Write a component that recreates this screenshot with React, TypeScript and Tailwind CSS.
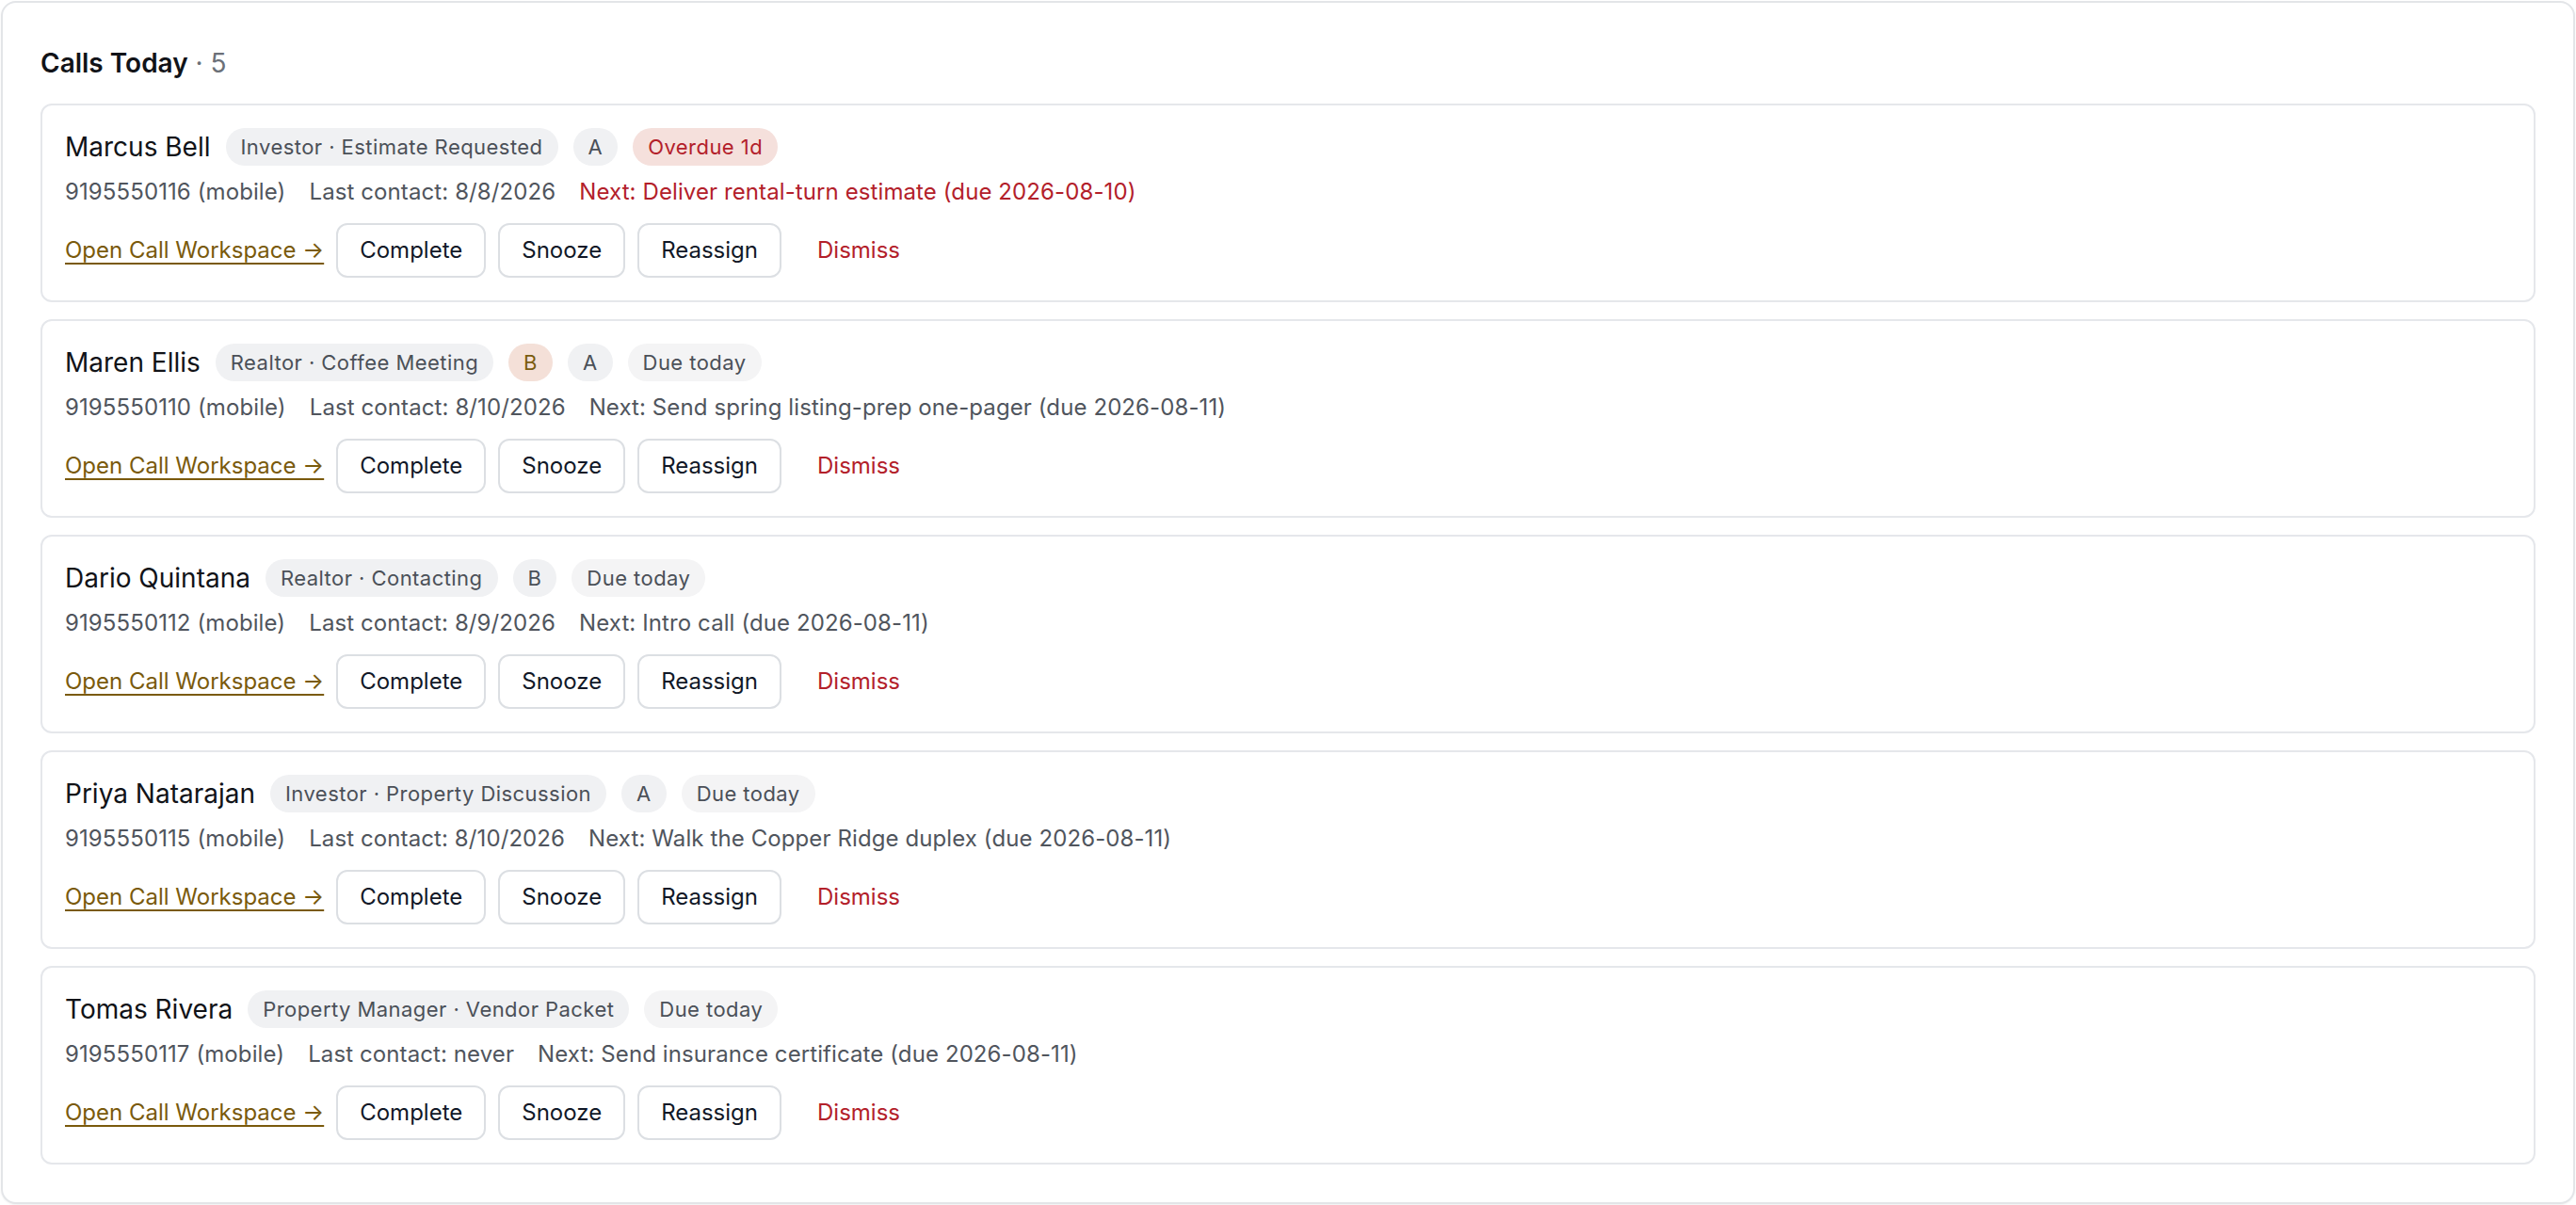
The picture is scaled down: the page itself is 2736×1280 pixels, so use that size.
import React from "react";

type Chip = { label: string; tone: "gray" | "grade" | "gradeB" | "due" | "overdue" };

type Call = {
  name: string;
  chips: Chip[];
  phone: string;
  last: string;
  next: string;
  overdue?: boolean;
};

const calls: Call[] = [
  {
    name: "Marcus Bell",
    chips: [
      { label: "Investor · Estimate Requested", tone: "gray" },
      { label: "A", tone: "grade" },
      { label: "Overdue 1d", tone: "overdue" },
    ],
    phone: "9195550116 (mobile)",
    last: "Last contact: 8/8/2026",
    next: "Next: Deliver rental-turn estimate (due 2026-08-10)",
    overdue: true,
  },
  {
    name: "Maren Ellis",
    chips: [
      { label: "Realtor · Coffee Meeting", tone: "gray" },
      { label: "B", tone: "gradeB" },
      { label: "A", tone: "grade" },
      { label: "Due today", tone: "due" },
    ],
    phone: "9195550110 (mobile)",
    last: "Last contact: 8/10/2026",
    next: "Next: Send spring listing-prep one-pager (due 2026-08-11)",
  },
  {
    name: "Dario Quintana",
    chips: [
      { label: "Realtor · Contacting", tone: "gray" },
      { label: "B", tone: "grade" },
      { label: "Due today", tone: "due" },
    ],
    phone: "9195550112 (mobile)",
    last: "Last contact: 8/9/2026",
    next: "Next: Intro call (due 2026-08-11)",
  },
  {
    name: "Priya Natarajan",
    chips: [
      { label: "Investor · Property Discussion", tone: "gray" },
      { label: "A", tone: "grade" },
      { label: "Due today", tone: "due" },
    ],
    phone: "9195550115 (mobile)",
    last: "Last contact: 8/10/2026",
    next: "Next: Walk the Copper Ridge duplex (due 2026-08-11)",
  },
  {
    name: "Tomas Rivera",
    chips: [
      { label: "Property Manager · Vendor Packet", tone: "gray" },
      { label: "Due today", tone: "due" },
    ],
    phone: "9195550117 (mobile)",
    last: "Last contact: never",
    next: "Next: Send insurance certificate (due 2026-08-11)",
  },
];

function ChipView({ chip }: { chip: Chip }) {
  const tone =
    chip.tone === "overdue"
      ? "bg-[#f5e0dc] text-[#b3202a]"
      : chip.tone === "gradeB"
      ? "bg-[#f4e0d8] text-[#7a5c0e]"
      : chip.tone === "due"
      ? "bg-[#f4f4f5] text-[#4b5058]"
      : "bg-[#f0f1f3] text-[#4b5058]";
  return (
    <span
      className={`inline-flex h-[40px] items-center rounded-full px-[16px] text-[22px] leading-[40px] tracking-[0.45px] ${tone}`}
    >
      {chip.label}
    </span>
  );
}

function Btn({ children }: { children: React.ReactNode }) {
  return (
    <button className="h-[58px] rounded-[12px] border-2 border-[#dcdfe3] bg-white px-[23px] text-[24px] text-[#111827]">
      {children}
    </button>
  );
}

function CallCard({ call }: { call: Call }) {
  return (
    <div className="rounded-[12px] border-2 border-[#e5e7eb] bg-white px-[24px] py-[24px]">
      <div className="flex h-[40px] items-center gap-[16px]">
        <span className="text-[28px] leading-[40px] text-[#111318]">{call.name}</span>
        {call.chips.map((c, i) => (
          <ChipView key={i} chip={c} />
        ))}
      </div>
      <div className="mt-[10px] flex h-[36px] items-center gap-[25px] text-[24px] leading-[36px] tracking-[0.1px] text-[#50555d]">
        <span>{call.phone}</span>
        <span>{call.last}</span>
        <span className={call.overdue ? "text-[#b3202a]" : ""}>{call.next}</span>
      </div>
      <div className="mt-[15px] flex items-center gap-[13px]">
        <a
          href="#"
          className="text-[24px] text-[#7a5a0c] underline decoration-2 underline-offset-[5px]"
        >
          Open Call Workspace →
        </a>
        <Btn>Complete</Btn>
        <Btn>Snooze</Btn>
        <Btn>Reassign</Btn>
        <button className="h-[58px] rounded-[12px] border-2 border-transparent px-[23px] text-[24px] text-[#b3202a]">
          Dismiss
        </button>
      </div>
    </div>
  );
}

export default function App() {
  return (
    <div className="bg-white p-px" style={{ fontFamily: "Inter, 'Noto Sans', sans-serif" }}>
      <div className="rounded-[16px] border-2 border-[#e3e5e8] bg-white p-[40px] shadow-[0_1px_2px_rgba(0,0,0,0.06)]">
        <h2 className="mb-[19px] text-[28px] leading-[48px] text-[#111318]">
          <span className="font-semibold">Calls Today</span>
          <span className="text-[#6b7078]"> · 5</span>
        </h2>
        <div className="flex flex-col gap-[18px]">
          {calls.map((c) => (
            <CallCard key={c.name} call={c} />
          ))}
        </div>
      </div>
    </div>
  );
}
